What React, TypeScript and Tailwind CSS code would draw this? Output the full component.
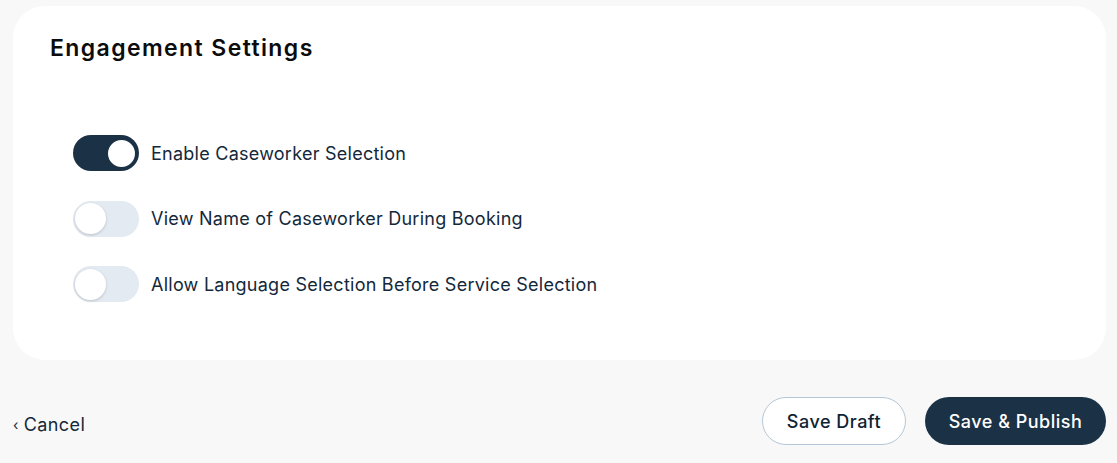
import { useState } from "react";

interface ToggleRowProps {
  label: string;
  checked: boolean;
  onChange: (v: boolean) => void;
}

function ToggleRow({ label, checked, onChange }: ToggleRowProps) {
  return (
    <div className="flex items-center gap-3 h-[36px]">
      <button
        onClick={() => onChange(!checked)}
        className={
          checked
            ? "relative w-[66px] h-[36px] rounded-full bg-[#1b3246] flex items-center justify-end pr-[2px] shrink-0"
            : "relative w-[66px] h-[36px] rounded-full bg-[#e3eaf2] flex items-center justify-start pl-[2px] shrink-0"
        }
      >
        <span
          className={
            checked
              ? "block w-[31px] h-[31px] rounded-full bg-white border-[2px] border-[#1b3246]"
              : "block w-[31px] h-[31px] rounded-full bg-white shadow-[0_1px_3px_rgba(0,0,0,0.18)]"
          }
        />
      </button>
      <span className="text-[18px] text-[#13283a] tracking-[0.25px]">{label}</span>
    </div>
  );
}

export default function App() {
  const [settings, setSettings] = useState([
    { label: "Enable Caseworker Selection", on: true },
    { label: "View Name of Caseworker During Booking", on: false },
    { label: "Allow Language Selection Before Service Selection", on: false },
  ]);

  const update = (i: number, v: boolean) =>
    setSettings((s) => s.map((item, idx) => (idx === i ? { ...item, on: v } : item)));

  return (
    <div
      className="w-[1117px] h-[463px] bg-[#f8f8f8] pt-[6px] px-[13px] flex flex-col"
      style={{ fontFamily: "Inter, 'Noto Sans', sans-serif" }}
    >
      <div className="w-[1093px] h-[354px] bg-white rounded-[32px] pl-[37px] pt-[30px]">
        <h2 className="text-[23px] font-semibold text-[#0c0c0c] leading-[24px] tracking-[1.4px]">
          Engagement Settings
        </h2>
        <div className="flex flex-col gap-[29.5px] mt-[75px] pl-[23px]">
          {settings.map((s, i) => (
            <ToggleRow key={s.label} label={s.label} checked={s.on} onChange={(v) => update(i, v)} />
          ))}
        </div>
      </div>

      <div className="flex items-center justify-between mt-[37px]">
        <button className="flex items-center gap-[5px] text-[18px] text-[#13283a] mt-[6px] tracking-[0.4px]">
          <span className="text-[14px]">‹</span>
          <span>Cancel</span>
        </button>
        <div className="flex items-center gap-[19px] mr-[-2px]">
          <button className="h-[48px] w-[144px] rounded-full border border-[#b5c7d6] bg-white text-[18px] font-medium text-[#0f2233] tracking-[0.5px]">
            Save Draft
          </button>
          <button className="h-[48px] w-[181px] rounded-full bg-[#1b3246] text-[18px] font-medium text-white tracking-[0.5px]">
            Save &amp; Publish
          </button>
        </div>
      </div>
    </div>
  );
}
